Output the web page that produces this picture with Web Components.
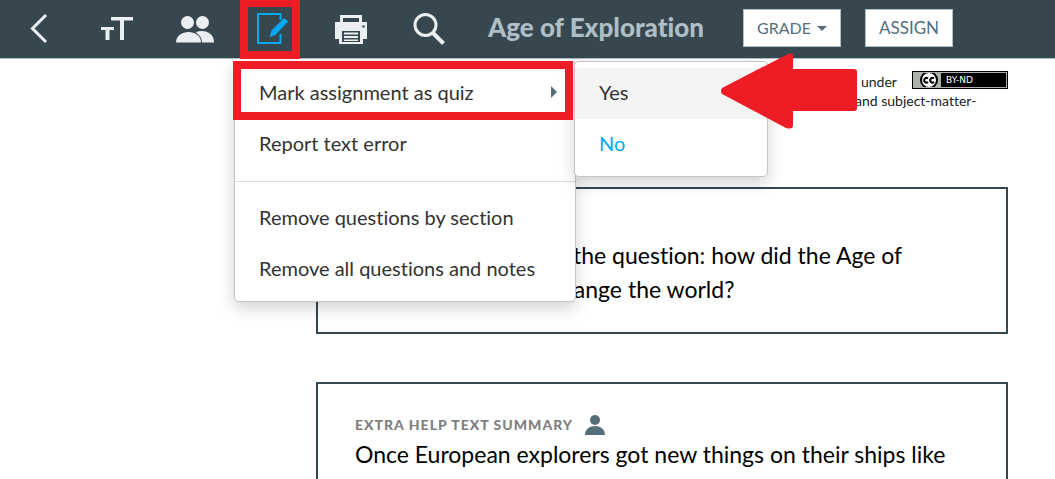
<!DOCTYPE html>
<html lang="en">
<head>
<meta charset="utf-8">
<meta name="viewport" content="width=device-width, initial-scale=1">
<title>Age of Exploration</title>
<style>
  html {
    --slate: #37474f;
    --slate-mid: #546e7a;
    --slate-light: #b0bec5;
    --accent: #03a9f4;
    --callout: #ee1c24;
  }

  body {
    margin: 0;
    background: white;
    color: #000;
    font-family: Lato, "Open Sans", sans-serif;
    font-variant-ligatures: none;
    overflow: hidden;
  }
</style>
</head>
<body>
<reader-app></reader-app>

<script>
/**
 * Base class: attaches an open shadow root and fills it from template()
 */
class BaseElement extends HTMLElement {
  connectedCallback() {
    if (this.shadowRoot) return;
    this.attachShadow({ mode: 'open' });
    this.shadowRoot.innerHTML = this.template();
  }
}

const ICONS = {
  back: '<path d="M27 6 13.500 19.500 27 33" fill="none" stroke="currentColor" stroke-width="3"/>',
  text: '<path d="M14 8h22v3.500h-9V31h-4V11.500h-9zM4 18h13v3h-4.500v10h-4V21H4z" fill="currentColor"/>',
  people: `
    <g fill="currentColor">
      <circle cx="27.500" cy="13.500" r="6.500"/>
      <path d="M21 23c9-3 18 1 18 10.500H27z"/>
      <circle cx="12.500" cy="13.500" r="7.500" fill="#37474f"/>
      <circle cx="12.500" cy="13.500" r="6.500"/>
      <path d="M0 34c0-16 27-16 27 0z" fill="#37474f"/>
      <path d="M1 33.500c0-14 25-14 25 0z"/>
    </g>`,
  edit: `
    <path d="M27.500 11V5H5v29h22.500V25" fill="none" stroke="currentColor" stroke-width="2"/>
    <path d="m16.500 28 2-6.500L31 9l4 3.500L22.500 26z" fill="currentColor"/>`,
  print: `
    <g fill="currentColor">
      <path d="M9 6h22v7h-3V9H12v4H9z"/>
      <path d="M4 13h32v17h-4v5H8v-5H4z"/>
      <path d="M11 22h18v11H11z" fill="#37474f"/>
      <path d="M13 23.500h14v2H13zM13 27h14v2H13zM13 30.500h14v1.500H13z"/>
      <circle cx="32.500" cy="17.500" r="1.200" fill="#37474f"/>
    </g>`,
  search: `
    <circle cx="16.500" cy="16" r="10.500" fill="none" stroke="currentColor" stroke-width="3"/>
    <path d="m24 24 10.500 10.500" stroke="currentColor" stroke-width="4"/>`
};

/**
 * @element tool-button
 * @attr {string} icon - key of ICONS
 * @attr {string} label - accessible name
 * The slot takes a popup that hangs below the button
 */
class ToolButton extends BaseElement {
  template() {
    return `
      <style>
        :host {
          display: block;
          position: relative;
          flex: 0 0 78px;
          color: #eceff1;
        }
        :host([active]) { color: var(--accent); }
        button {
          display: flex;
          align-items: center;
          justify-content: center;
          width: 100%;
          height: 58px;
          padding: 0;
          border: 0;
          background: none;
          color: inherit;
          cursor: pointer;
        }
        svg { display: block; width: 40px; height: 40px; }
      </style>
      <button type="button" aria-label="${this.getAttribute('label')}">
        <svg viewBox="0 0 40 40" aria-hidden="true">${ICONS[this.getAttribute('icon')]}</svg>
      </button>
      <slot></slot>
    `;
  }
}

/**
 * @element action-button
 * @attr {boolean} caret - adds the drop-down arrow
 */
class ActionButton extends BaseElement {
  template() {
    return `
      <style>
        :host { display: block; font-size: 17px; }
        :host([caret]) { font-size: 16px; }
        button {
          display: flex;
          align-items: center;
          gap: 6px;
          height: 38px;
          padding: 0 13px 2px;
          border: 1px solid var(--slate-light);
          background: white;
          color: var(--slate-mid);
          font: inherit;
          white-space: nowrap;
        }
        i {
          margin-top: 2px;
          border: 5px solid transparent;
          border-top-color: currentColor;
          border-bottom: 0;
        }
      </style>
      <button type="button"><slot></slot>${this.hasAttribute('caret') ? '<i></i>' : ''}</button>
    `;
  }
}

/**
 * @element menu-panel
 * White popup that holds menu-item elements
 */
class MenuPanel extends BaseElement {
  template() {
    return `
      <style>
        :host {
          display: block;
          position: absolute;
          top: 61px;
          left: 0;
          z-index: 2;
          box-sizing: border-box;
          width: 342px;
          padding: 6px 0;
          border: 1px solid #c4c4c4;
          border-radius: 5px;
          background: white;
          box-shadow: 0 6px 16px rgba(0, 0, 0, 0.18);
        }
        :host([sub]) {
          top: -7px;
          left: calc(100% - 1px);
          width: 194px;
        }
        ::slotted(hr) {
          height: 1px;
          margin: 11px 0;
          border: 0;
          background: #ddd;
        }
      </style>
      <div role="menu"><slot></slot></div>
    `;
  }
}

/**
 * @element menu-item
 * @attr {string} label
 * @attr {boolean} hover, selected, parent
 */
class MenuItem extends BaseElement {
  template() {
    return `
      <style>
        :host { display: block; position: relative; color: #333; }
        :host([hover]) { background: #f4f4f4; }
        :host([selected]) { color: var(--accent); }
        button {
          display: flex;
          align-items: center;
          justify-content: space-between;
          width: 100%;
          height: 51px;
          padding: 0 18px 4px 24px;
          border: 0;
          background: none;
          color: inherit;
          font: inherit;
          font-size: 20px;
          text-align: left;
          white-space: nowrap;
        }
        i {
          border: 6px solid transparent;
          border-left-color: var(--slate-mid);
          border-right: 0;
        }
      </style>
      <button type="button" role="menuitem">${this.getAttribute('label')}${this.hasAttribute('parent') ? '<i></i>' : ''}</button>
      <slot></slot>
    `;
  }
}

/**
 * @element callout-frame
 * Red frame laid over a control
 */
class CalloutFrame extends BaseElement {
  template() {
    return `
      <style>
        :host {
          display: block;
          position: absolute;
          z-index: 3;
          box-sizing: border-box;
          border: 8px solid var(--callout);
          pointer-events: none;
        }
        :host([for="tool"]) { top: -1px; left: 6px; width: 60px; height: 60px; }
        :host([for="item"]) { top: -7px; left: -2px; width: 340px; height: 59px; }
      </style>
    `;
  }
}

/** @element callout-arrow */
class CalloutArrow extends BaseElement {
  template() {
    return `
      <style>
        :host {
          display: block;
          position: absolute;
          top: -9px;
          left: 146px;
          z-index: 4;
          pointer-events: none;
        }
        svg { display: block; width: 136px; height: 76px; fill: var(--callout); }
      </style>
      <svg viewBox="0 0 136 76" aria-hidden="true">
        <path d="M1 35 67 1q5-2 5 2v13h61q3 0 3 3v36q0 3-3 3H72v14q0 5-7 3L1 41q-2-3 0-6z"/>
      </svg>
    `;
  }
}

/** @element reader-toolbar */
class ReaderToolbar extends BaseElement {
  template() {
    return `
      <style>
        :host {
          display: block;
          position: relative;
          z-index: 1;
          background: var(--slate);
          border-bottom: 1px solid var(--slate-light);
        }
        header { display: flex; align-items: center; height: 58px; }
        h1 {
          margin: 0 39px 0 20px;
          padding-bottom: 4px;
          color: var(--slate-light);
          font-size: 26px;
          line-height: 32px;
          font-weight: 900;
          white-space: nowrap;
        }
        .actions { display: flex; gap: 24px; padding-bottom: 2px; }
      </style>
      <header>
        <tool-button icon="back" label="Back"></tool-button>
        <tool-button icon="text" label="Text size"></tool-button>
        <tool-button icon="people" label="Class"></tool-button>
        <tool-button icon="edit" label="Edit assignment" active>
          <callout-frame for="tool"></callout-frame>
          <menu-panel>
            <menu-item label="Mark assignment as quiz" parent>
              <callout-frame for="item"></callout-frame>
              <menu-panel sub>
                <menu-item label="Yes" hover></menu-item>
                <menu-item label="No" selected></menu-item>
                <callout-arrow></callout-arrow>
              </menu-panel>
            </menu-item>
            <menu-item label="Report text error"></menu-item>
            <hr>
            <menu-item label="Remove questions by section"></menu-item>
            <menu-item label="Remove all questions and notes"></menu-item>
          </menu-panel>
        </tool-button>
        <tool-button icon="print" label="Print"></tool-button>
        <tool-button icon="search" label="Search"></tool-button>
        <h1>Age of Exploration</h1>
        <div class="actions">
          <action-button caret>GRADE</action-button>
          <action-button>ASSIGN</action-button>
        </div>
      </header>
    `;
  }
}

/** @element license-note */
class LicenseNote extends BaseElement {
  template() {
    return `
      <style>
        :host { display: flex; justify-content: flex-end; }
        .note { width: 153px; font-size: 14px; line-height: 19px; color: #222; white-space: nowrap; }
        .row { display: flex; justify-content: space-between; align-items: center; padding-left: 6px; }
        a {
          display: flex;
          align-items: center;
          box-sizing: border-box;
          width: 96px;
          height: 18px;
          margin-top: -4px;
          border: 1px solid #000;
          outline: 1px solid #aab2ab;
          outline-offset: -2px;
          background: linear-gradient(90deg, #aab2ab 28px, #000 28px);
          color: white;
          font: 9px "DejaVu Sans", sans-serif;
          text-decoration: none;
        }
        svg { flex: none; width: 33px; height: 16px; }
      </style>
      <div class="note">
        <div class="row">
          <span>under</span>
          <a href="#license">
            <svg viewBox="0 0 33 16" aria-hidden="true">
              <circle cx="16" cy="8" r="10" fill="#aab2ab"/>
              <circle cx="16" cy="8" r="8" fill="#fff" stroke="#000" stroke-width="2"/>
              <g fill="none" stroke="#000" stroke-width="2">
                <path d="M15 6.500a2.300 2.300 0 1 0 0 3.500M21 6.500a2.300 2.300 0 1 0 0 3.500"/>
              </g>
            </svg>
            BY-ND
          </a>
        </div>
        <div>and subject-matter-</div>
      </div>
    `;
  }
}

/**
 * @element note-card
 * @attr {string} heading - optional
 * @attr {boolean} person - shows the reader icon after the heading
 */
class NoteCard extends BaseElement {
  template() {
    return `
      <style>
        :host {
          display: block;
          padding: 29px 37px 26px;
          border: 2px solid var(--slate);
          font-size: 23px;
          line-height: 34px;
        }
        h2 {
          display: flex;
          align-items: center;
          gap: 12px;
          height: 20px;
          margin: 0;
          color: #808080;
          font-size: 14px;
          line-height: 20px;
          font-weight: 900;
          letter-spacing: 1px;
        }
        :host([person]) h2 { height: 24px; }
        svg { width: 20px; height: 20px; fill: var(--slate-mid); }
      </style>
      <h2>${this.getAttribute('heading') || ''}
        ${this.hasAttribute('person') ? `
        <svg viewBox="0 0 20 20" aria-hidden="true">
          <circle cx="10" cy="5" r="5"/><path d="M0 20c0-12 20-12 20 0z"/>
        </svg>` : ''}
      </h2>
      <slot></slot>
    `;
  }
}

/** @element reader-app */
class ReaderApp extends BaseElement {
  template() {
    return `
      <style>
        :host { display: block; }
        main {
          display: flex;
          flex-direction: column;
          padding: 13px 47px 0 316px;
        }
        .cards { display: grid; gap: 48px; margin-top: 77px; }
        p { margin: 0; }
        .question { padding-left: 195px; text-indent: 23px; }
      </style>
      <reader-toolbar></reader-toolbar>
      <main>
        <license-note></license-note>
        <div class="cards">
          <note-card>
            <p class="question">the question: how did the Age of<br>change the world?</p>
          </note-card>
          <note-card heading="EXTRA HELP TEXT SUMMARY" person>
            <p>Once European explorers got new things on their ships like</p>
          </note-card>
        </div>
      </main>
    `;
  }
}

customElements.define('tool-button', ToolButton);
customElements.define('action-button', ActionButton);
customElements.define('menu-panel', MenuPanel);
customElements.define('menu-item', MenuItem);
customElements.define('callout-frame', CalloutFrame);
customElements.define('callout-arrow', CalloutArrow);
customElements.define('reader-toolbar', ReaderToolbar);
customElements.define('license-note', LicenseNote);
customElements.define('note-card', NoteCard);
customElements.define('reader-app', ReaderApp);
</script>
</body>
</html>
